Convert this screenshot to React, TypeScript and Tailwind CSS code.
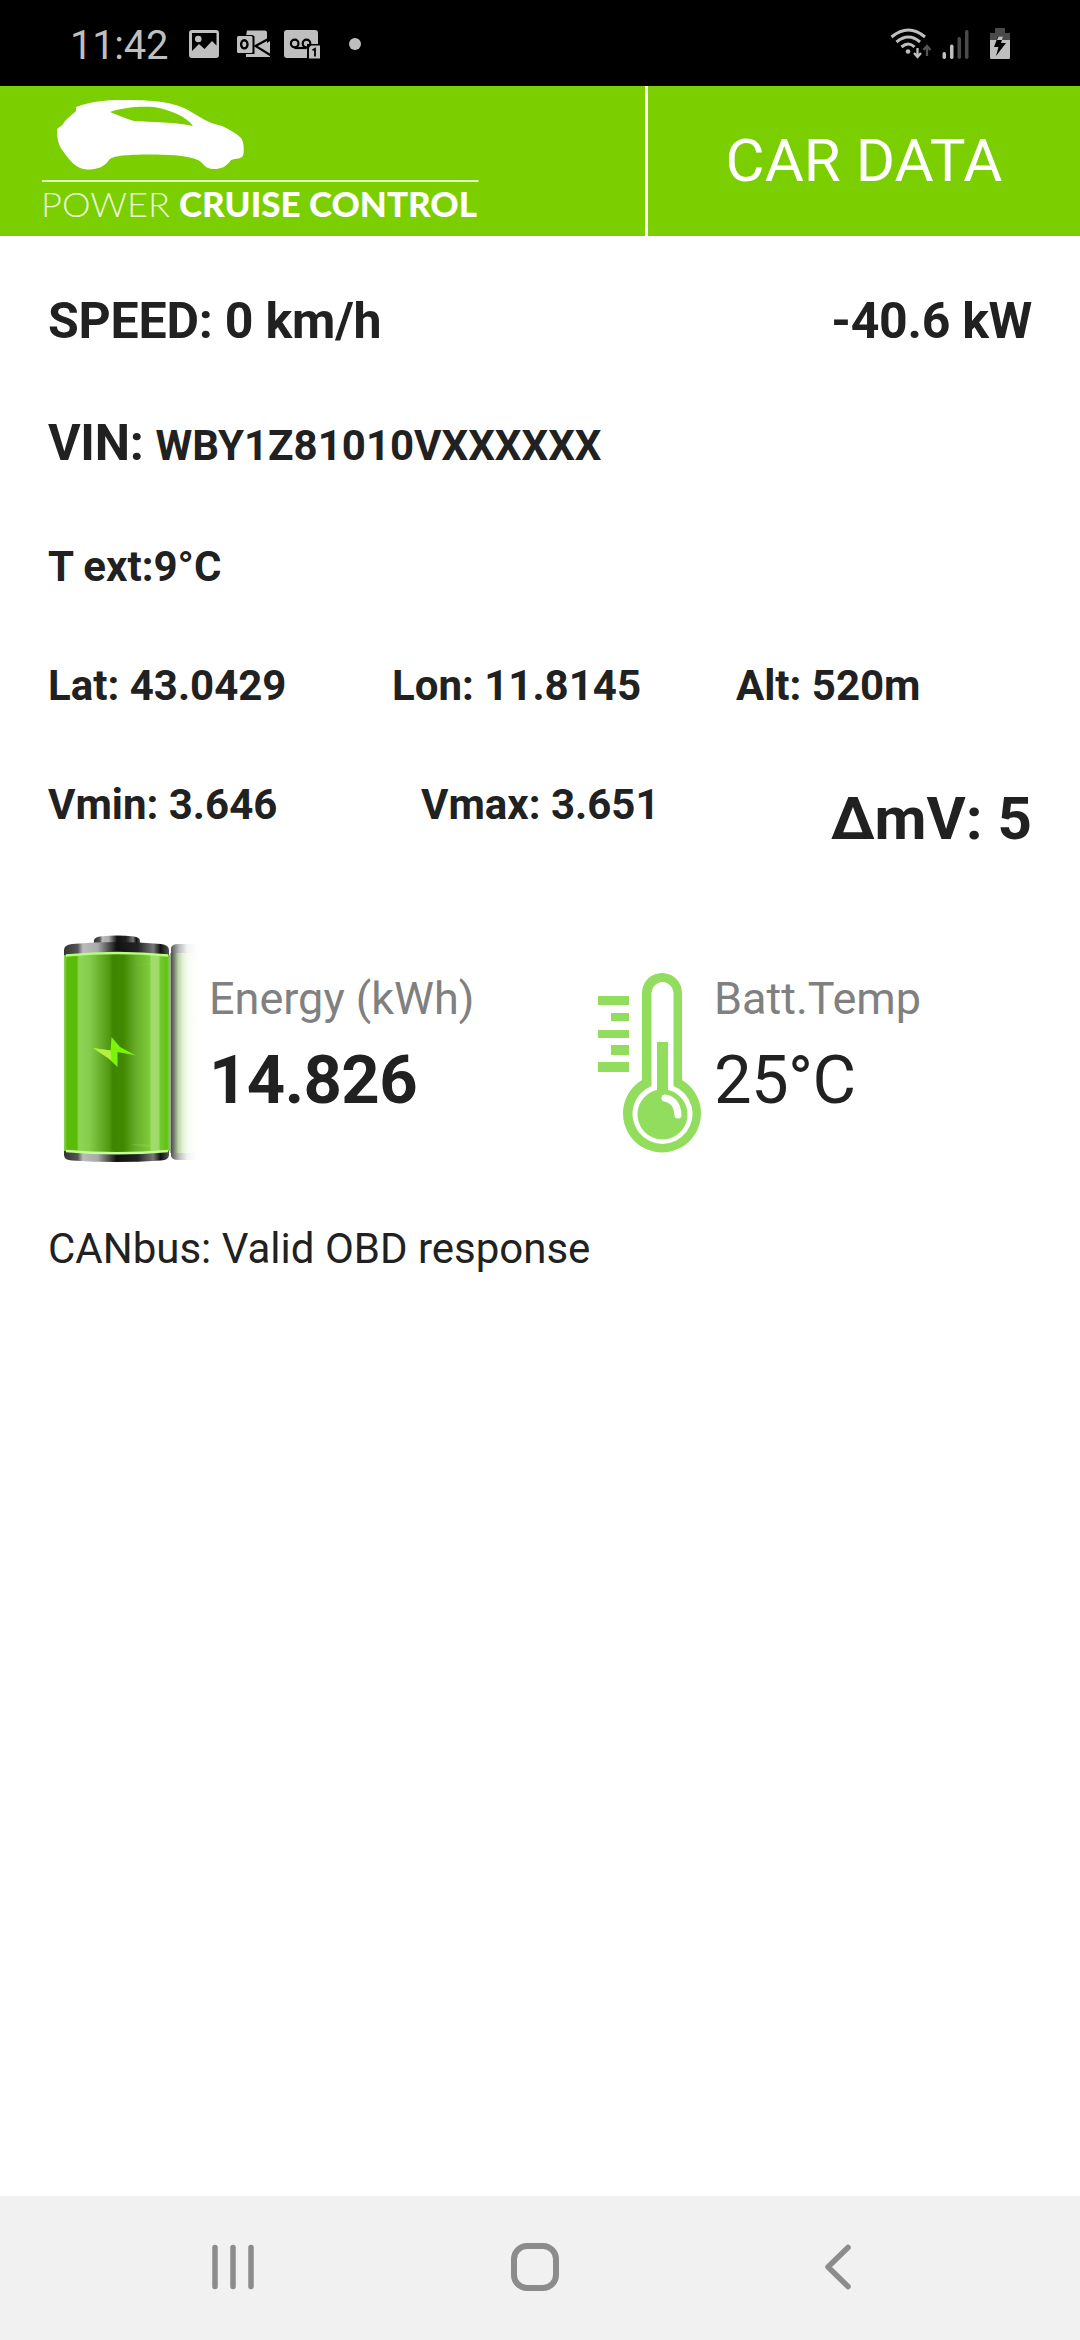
const font = "font-['Roboto',sans-serif]";

const StatusBar = () => (
  <header className="flex h-[86px] items-center justify-between bg-black text-[#bfbfbf]">
    <div className="flex items-center">
      <span className="ml-[70px] w-[119px] pt-[6px] text-[40px] leading-[80px] tracking-[-0.3px]">11:42</span>
      <svg className="h-[86px] w-[180px]" viewBox="189 0 180 86" fill="currentColor">
        {/* gallery */}
        <path
          fillRule="evenodd"
          d="M192 30h24q3 0 3 3v22q0 3-3 3h-24q-3 0-3-3V33q0-3 3-3Zm0 3v18l7-7 5.500 5 7.500-8 4.500 4.500V33Z"
        />
        <circle cx="198.300" cy="39" r="3.300" />
        {/* outlook */}
        <path d="M247 30.500h18q2 0 2 2V43l3-2v16h-24v-3h8.500V36H246Z" />
        <path d="M271 37.500 255.500 46 271 55.500" fill="none" stroke="#000" strokeWidth="2.200" />
        <rect x="236" y="35" width="18" height="19" rx="2" fill="#000" />
        <rect x="237" y="36" width="15.500" height="17" rx="1.500" />
        <ellipse cx="244.300" cy="44.300" rx="3.200" ry="4" fill="none" stroke="#000" strokeWidth="2.400" />
        {/* voicemail */}
        <path d="M287 30h28q3 0 3 3v11h-11v14h-20q-3 0-3-3V33q0-3 3-3Z" />
        <g fill="none" stroke="#000" strokeWidth="2.200">
          <circle cx="294.700" cy="43.500" r="3.800" />
          <circle cx="306.500" cy="43.500" r="3.800" />
          <path d="M294.500 48h12" />
        </g>
        <path d="M307 47l3-3h10v14.500h-13Z" fill="#000" />
        <path d="M309 47.500 311 45.500h9V58.500h-11Z" />
        <path d="M312.500 50.300 315 48.800V56.500" fill="none" stroke="#000" strokeWidth="1.800" />
        <circle cx="355" cy="44" r="6" />
      </svg>
    </div>

    <svg className="h-[86px] w-[210px]" viewBox="870 0 210 86" fill="currentColor">
      <g fill="none" stroke="currentColor" strokeWidth="3">
        <path d="M891.500 37q17-14 33.500 0" />
        <path d="M896.500 42q12-10 23.500 0" />
        <path d="M901.500 47q7-6 13 0" />
        <path d="M917.500 48v9m-3.500-4 3.500 4 3.500-4" strokeWidth="2.300" />
        <path d="M927 56v-10m-3.500 4 3.500-4 3.500 4" strokeWidth="2.300" stroke="#555" />
      </g>
      <circle cx="908" cy="51.500" r="2.300" />
      <rect x="942.500" y="52" width="3.500" height="7" rx="1.700" />
      <rect x="950" y="44.500" width="3.500" height="14.500" rx="1.700" />
      <rect x="957.500" y="37" width="3.500" height="22" rx="1.700" fill="#4a4a4a" />
      <rect x="965" y="30" width="3.500" height="29" rx="1.700" fill="#4a4a4a" />
      <path d="M995 28h10v5h5v7h-20v-7h5Z" fill="#4a4a4a" />
      <path d="M990 40h20v17.500q0 1.500-1.500 1.500h-17q-1.500 0-1.500-1.500Z" />
      <path d="m998 36.500-4 10.500h4.500L996 56l10-13h-5l2-6.500Z" fill="#000" />
      <path d="m998.500 36.500-1.500 3.500h5l1-3.500Z" />
    </svg>
  </header>
);

const Logo = () => (
  <svg className="h-[150px] w-[645px]" viewBox="0 86 645 150">
    <path
      fill="#fff"
      fillRule="evenodd"
      d="M76 107C94 100 112 100 128 100C158 100 178 103 193 113C205 120 209 123 222 126C230 130 236 133 241 138C244 142 244 149 243.500 154C242 160 236 158 231 160C226 167 221 169 214 169C204 169 204 163 198 160C184 154 158 154.500 144 154.500C131 155 113 155 109 160C104 167 98 169.500 87 169.500C76 169 70 161 63 151C58 145 57 137 57 130C58 127 61 127 63 124C67 118 73 114 76 111ZM110 112C118 115 127 119 134 121C150 122 177 122 193 126C187 117 171 110 154 107C137 106 121 108 110 112Z"
    />
    <rect x="42" y="180" width="436.500" height="2" fill="#fff" fillOpacity=".75" />
    <text
      x="41"
      y="216.500"
      className="font-['Lato',sans-serif] text-[34px] font-light"
      fill="#fff"
      fillOpacity=".85"
      textLength="129"
      lengthAdjust="spacingAndGlyphs"
    >
      POWER
    </text>
    <text
      x="179"
      y="216.500"
      className="font-['Lato',sans-serif] text-[34px] font-black"
      fill="#fff"
      textLength="298"
      lengthAdjust="spacingAndGlyphs"
    >
      CRUISE CONTROL
    </text>
  </svg>
);

const BatteryIcon = () => (
  <svg className="h-[265px] w-[161px] shrink-0" viewBox="48 915 161 265">
    <defs>
      <linearGradient id="cell">
        <stop offset="0" stopColor="#8fd35c" />
        <stop offset=".03" stopColor="#58bd08" />
        <stop offset=".12" stopColor="#5abb0a" />
        <stop offset=".14" stopColor="#8fd556" />
        <stop offset=".24" stopColor="#85cd4c" />
        <stop offset=".43" stopColor="#4f9810" />
        <stop offset=".46" stopColor="#3f8500" />
        <stop offset=".56" stopColor="#418800" />
        <stop offset=".68" stopColor="#68ae2b" />
        <stop offset=".81" stopColor="#7ccd38" />
        <stop offset=".82" stopColor="#a0db6c" />
        <stop offset=".89" stopColor="#a0db6c" />
        <stop offset=".91" stopColor="#72c931" />
        <stop offset=".97" stopColor="#5fc210" />
        <stop offset="1" stopColor="#8bd34f" />
      </linearGradient>
      <linearGradient id="metal">
        <stop offset="0" stopColor="#333" />
        <stop offset=".13" stopColor="#555" />
        <stop offset=".18" stopColor="#bbb" />
        <stop offset=".32" stopColor="#aaa" />
        <stop offset=".5" stopColor="#111" />
        <stop offset=".7" stopColor="#222" />
        <stop offset=".85" stopColor="#777" />
        <stop offset=".92" stopColor="#111" />
        <stop offset="1" stopColor="#555" />
      </linearGradient>
      <linearGradient id="ghost">
        <stop offset="0" stopColor="#444" />
        <stop offset=".13" stopColor="#777f70" />
        <stop offset=".28" stopColor="#bcd6aa" />
        <stop offset=".45" stopColor="#e3f3d8" />
        <stop offset=".65" stopColor="#f7fcf4" />
        <stop offset="1" stopColor="#fff" />
      </linearGradient>
      <linearGradient id="ghostCap">
        <stop offset="0" stopColor="#555" />
        <stop offset=".3" stopColor="#bbb" />
        <stop offset=".6" stopColor="#f3f3f3" />
        <stop offset="1" stopColor="#fff" />
      </linearGradient>
    </defs>
    <path d="M171 948q1-4 7-4h20v12h-27Z" fill="url(#ghostCap)" />
    <path d="M171 1151h27v9h-20q-6 0-7-4Z" fill="url(#ghostCap)" />
    <rect x="170.500" y="953" width="28" height="200" fill="url(#ghost)" />
    <path d="M94 945v-5q1-3 6-3.500 17-2 34 0 5 .5 6 3.500v5Z" fill="url(#metal)" />
    <path d="M64 955v-5q0-5 8-6 45-4 89 0 8 1 8 6v5Z" fill="url(#metal)" />
    <path d="M64 1150h105v5q0 5-8 5.500-45 3-89 0-8-.5-8-5.500Z" fill="url(#metal)" />
    <path d="M64 955q53-5 106 0v196q-53 5-106 0Z" fill="url(#cell)" />
    <path d="M66 955.500q51-5 102 0" fill="none" stroke="#b5ff80" strokeWidth="2.500" />
    <path d="M66 1151q51 4.500 102 0" fill="none" stroke="#c4ff96" strokeWidth="2.500" />
    <path d="M130 965q20 0 31-5-6 6-31 5ZM130 1144q20-1 31 3-13 1-31-3Z" fill="#a0db6c" fillOpacity=".25" />
    <path d="M93 1048 110.500 1050.500 111.500 1037 120 1047 136 1055.500 117.500 1052v15L108 1058Z" fill="#7df308" />
    <path d="m93 1048 17.500 2.500 1 10L108 1058Z" fill="#b5ee45" />
  </svg>
);

const ThermometerIcon = () => (
  <svg className="h-[210px] w-[124px] shrink-0" viewBox="590 955 124 210" fill="#92dd5e">
    <path d="M598 996h31v9h-31ZM611 1013h18v8h-18ZM598 1030h31v8h-31ZM611 1045h18v10h-18ZM598 1062h31v10h-31Z" />
    <path d="M642 993a20 20 0 0 1 40 0v87a39 39 0 1 1-40 0Z" />
    <path d="M651.500 994a11 12 0 0 1 22 0v92a30 30 0 1 1-22 0Z" fill="#fff" />
    <path d="M657 1042h11v48a25 25 0 1 1-11 0Z" />
    <path d="M665 1098q12 2 13 17" fill="none" stroke="#fff" strokeWidth="7" strokeLinecap="round" />
  </svg>
);

const NavigationBar = () => (
  <nav className="h-[144px] bg-[#f1f1f1]">
    <svg className="h-[144px] w-full" viewBox="0 2196 1080 144" fill="none" stroke="#8c8c8c">
      <path d="M215 2247.500v39M233 2247.500v39M251 2247.500v39" strokeWidth="5.500" strokeLinecap="round" />
      <rect x="514" y="2246" width="42" height="42" rx="13" strokeWidth="6" />
      <path d="m848 2247.500-20 19.500 20 19.500" strokeWidth="5.500" strokeLinecap="round" strokeLinejoin="round" />
    </svg>
  </nav>
);

export default function App() {
  return (
    <div className={`flex h-[2340px] w-[1080px] flex-col overflow-hidden bg-white text-[#212121] ${font}`}>
      <StatusBar />

      <div className="flex h-[150px] bg-[#7bce00]">
        <Logo />
        <h1 className="flex-1 border-l-[3px] border-white text-center text-[60px] leading-[150px] text-white">
          CAR DATA
        </h1>
      </div>

      <main className="flex flex-1 flex-col px-12 pt-[55px] font-bold">
        <div className="flex justify-between text-[50px] leading-[60px] tracking-[-0.3px]">
          <span className="tracking-[-0.2px]">SPEED: 0 km/h</span>
          <span>-40.6 kW</span>
        </div>

        <div className="mt-[62px] h-[60px] text-[50px] leading-[60px] tracking-[-0.3px]">
          VIN: <span className="text-[42px] tracking-normal">WBY1Z81010VXXXXXX</span>
        </div>

        <div className="mt-[69px] text-[42px] leading-[50px]">T ext:9°C</div>

        <div className="mt-[69px] grid grid-cols-[344px_344px_1fr] text-[42px] leading-[50px]">
          <span>Lat: 43.0429</span>
          <span>Lon: 11.8145</span>
          <span>Alt: 520m</span>
        </div>

        <div className="mt-[69px] flex h-[80px] text-[42px] leading-[50px]">
          <span className="w-[373px]">Vmin: 3.646</span>
          <span className="flex-1">Vmax: 3.651</span>
          <span className="text-[60px] leading-[78px]">ΔmV: 5</span>
        </div>

        <section className="mt-[55px] flex font-normal">
          <BatteryIcon />
          <div className="w-[381px] pt-[57px]">
            <div className="text-[45px] leading-[53px] text-[#808080]">Energy (kWh)</div>
            <div className="mt-[15px] text-[67px] font-bold leading-[80px] tracking-[-0.6px]">14.826</div>
          </div>
          <div className="flex pt-10">
            <ThermometerIcon />
            <div className="pt-[17px]">
              <div className="text-[45px] leading-[53px] text-[#808080]">Batt.Temp</div>
              <div className="mt-[15px] text-[67px] leading-[80px] tracking-[-0.6px]">25°C</div>
            </div>
          </div>
        </section>

        <div className="mt-11 text-[42px] font-normal leading-[50px]">CANbus: Valid OBD response</div>
      </main>

      <NavigationBar />
    </div>
  );
}
